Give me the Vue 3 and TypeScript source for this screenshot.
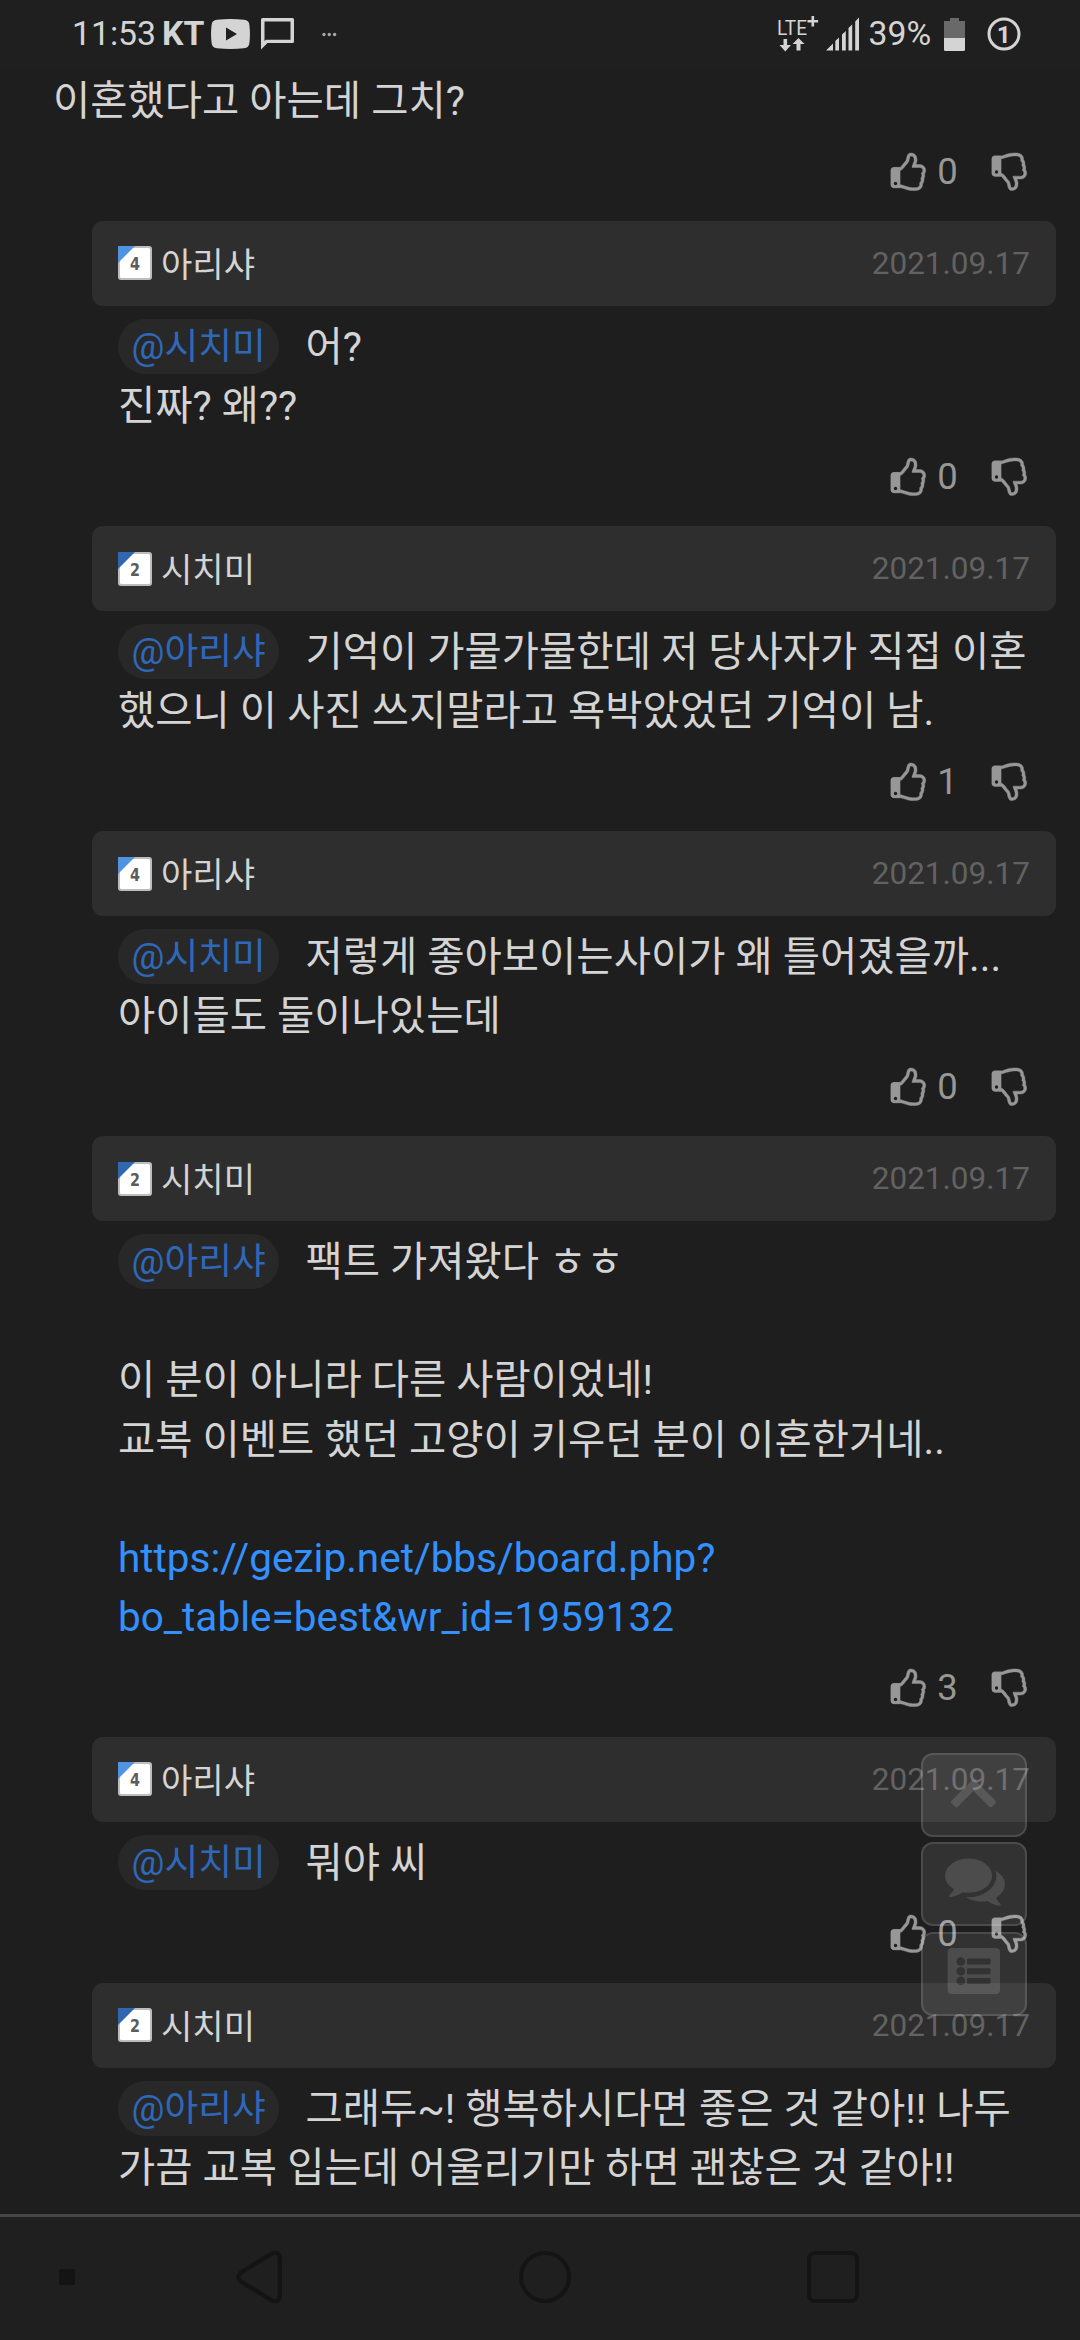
<script setup lang="ts">
interface Comment {
  author: string
  level: number
  mention: string
  lines: string[]
  link?: string[]
  likes?: number
}

const date = '2021.09.17'

const comments: Comment[] = [
  { author: '아리샤', level: 4, mention: '@시치미', lines: ['어?', '진짜? 왜??'], likes: 0 },
  {
    author: '시치미',
    level: 2,
    mention: '@아리샤',
    lines: ['기억이 가물가물한데 저 당사자가 직접 이혼', '했으니 이 사진 쓰지말라고 욕박았었던 기억이 남.'],
    likes: 1,
  },
  {
    author: '아리샤',
    level: 4,
    mention: '@시치미',
    lines: ['저렇게 좋아보이는사이가 왜 틀어졌을까...', '아이들도 둘이나있는데'],
    likes: 0,
  },
  {
    author: '시치미',
    level: 2,
    mention: '@아리샤',
    lines: ['팩트 가져왔다 ㅎㅎ', '', '이 분이 아니라 다른 사람이었네!', '교복 이벤트 했던 고양이 키우던 분이 이혼한거네..', ''],
    link: ['https://gezip.net/bbs/board.php?', 'bo_table=best&wr_id=1959132'],
    likes: 3,
  },
  { author: '아리샤', level: 4, mention: '@시치미', lines: ['뭐야 씨'], likes: 0 },
  {
    author: '시치미',
    level: 2,
    mention: '@아리샤',
    lines: ['그래두~! 행복하시다면 좋은 것 같아!! 나두', '가끔 교복 입는데 어울리기만 하면 괜찮은 것 같아!!'],
  },
]

const thumb =
  'M1408 768q0-51-39-89.5t-89-38.5h-352q0-58 48-159.5t48-160.5q0-98-32-145t-128-47q-26 26-38 85t-30.5 125.5-59.5 109.5q-22 23-77 91-4 5-23 30t-31.5 41-34.5 42.5-40 44-38.5 35.5-40 27-35.5 9h-32v640h32q13 0 31.5 3t33 6.5 38 11 35 11.5 35.5 12.5 29 10.5q211 73 342 73h121q192 0 192-167 0-26-5-56 30-16 47.5-52.5t17.5-73.5-18-69q53-50 53-119 0-25-10-55.5t-25-47.5q32-1 53.5-47t21.5-81zm128-1q0 89-49 163 9 33 9 69 0 77-38 144 3 21 3 43 0 101-60 178 1 139-85 219.5t-227 80.5h-129q-96 0-189.5-22.5t-216.5-65.5q-116-40-138-40h-288q-53 0-90.5-37.5t-37.5-90.5v-640q0-53 37.5-90.5t90.5-37.5h274q36-24 137-155 58-75 107-128 24-25 35.5-85.5t30.5-126.5 62-108q39-37 90-37 84 0 151 32.5t102 101.5 35 186q0 93-48 192h176q104 0 180 76t76 179z'
const cuff = 'M128 640H400V1536H128Q0 1536 0 1408V768Q0 640 128 640z'
</script>

<template>
  <div class="screen">
    <header class="status">
      <span class="clock">11:53</span>
      <span class="carrier">KT</span>
      <svg class="yt" width="39" height="30" viewBox="0 0 39 30">
        <path fill-rule="evenodd" d="M6 .8Q19.500-.6 33 .8Q38 1.200 38.400 6Q39.500 15 38.400 24Q38 28.800 33 29.200Q19.500 30.600 6 29.200Q1 28.800.6 24Q-.5 15 .6 6Q1 1.200 6 .8zM15 8.500V21.500L26 15z" />
      </svg>
      <svg class="msg" width="33" height="32" viewBox="0 0 33 32">
        <path fill-rule="evenodd" d="M1.500 0H31.500Q33 0 33 1.500V23.500Q33 25 31.500 25H6.500L0 31.500V1.500Q0 0 1.500 0zM3.500 3.500V23L5 21.700H29.500V3.500z" />
      </svg>
      <svg class="dots" width="15" height="5" viewBox="0 0 15 5">
        <circle cx="2" cy="2.500" r="1.700" /><circle cx="7.300" cy="2.500" r="1.700" /><circle cx="12.600" cy="2.500" r="1.700" />
      </svg>
      <svg class="lte" width="43" height="38" viewBox="0 0 43 38">
        <text x="0" y="20" font-size="21" textLength="30" lengthAdjust="spacingAndGlyphs">LTE</text>
        <path d="M34.500 1h2.600v4h4v2.600h-4v4h-2.600v-4h-4v-2.600h4z" />
        <path d="M6.500 24h3.600v6h3.900L8.300 36.500 2.500 30h4zM21.500 23l6 6h-4v6.500h-4V29h-4z" />
      </svg>
      <svg class="signal" width="34" height="34" viewBox="0 0 34 34">
        <path d="M0 33.500L7 26.500V33.500zM9.300 24L13 20.500V33.500H9.300zM16 17.500L19.800 14V33.500H16zM22.500 11L26.200 7.500V33.500H22.500zM29.200 4.500L33 .5V33.500H29.200z" />
      </svg>
      <span class="percent">39%</span>
      <svg class="battery" width="21" height="33" viewBox="0 0 21 33">
        <path class="empty" d="M6 0h9v3h6v17H0V3h6z" />
        <path d="M0 20h21v11.500q0 1.500-1.500 1.500h-18Q0 33 0 31.500z" />
      </svg>
      <svg class="one" width="34" height="34" viewBox="0 0 34 34">
        <circle class="ring" cx="17" cy="17" r="15" />
        <text x="16.800" y="25.700" font-size="24.500" font-weight="700" text-anchor="middle">1</text>
      </svg>
    </header>

    <main>
      <section class="root-comment">
        <p class="line">이혼했다고 아는데 그치?</p>
        <div class="votes">
          <svg class="up" viewBox="0 0 1536 1664">
            <path :d="thumb" fill-rule="evenodd" /><path :d="cuff" /><circle class="button-dot" cx="200" cy="1350" r="75" />
          </svg>
          <span class="count">0</span>
          <svg class="down" viewBox="0 0 1536 1664">
            <path :d="thumb" fill-rule="evenodd" /><path :d="cuff" /><circle class="button-dot" cx="200" cy="826" r="75" />
          </svg>
        </div>
      </section>

      <article v-for="(c, i) in comments" :key="i" class="reply">
        <div class="head">
          <svg class="badge" width="34" height="34" viewBox="0 0 34 34">
            <rect width="34" height="34" rx="3" fill="#bdbdbd" />
            <rect x="2" y="2" width="30" height="30" rx="1.500" fill="#fff" />
            <path d="M0 0H17L0 17z" :fill="c.level === 4 ? '#5093e3' : '#2f68b0'" />
            <text x="12" y="23.500" textLength="10" lengthAdjust="spacingAndGlyphs">{{ c.level }}</text>
          </svg>
          <span class="author">{{ c.author }}</span>
          <time class="date">{{ date }}</time>
        </div>
        <div class="body">
          <p v-for="(l, n) in c.lines" :key="n" class="line">
            <span v-if="n === 0" class="mention">{{ c.mention }}</span>{{ l }}
          </p>
          <a v-if="c.link" class="link"><span v-for="part in c.link" :key="part" class="line">{{ part }}</span></a>
        </div>
        <div v-if="c.likes !== undefined" class="votes">
          <svg class="up" viewBox="0 0 1536 1664">
            <path :d="thumb" fill-rule="evenodd" /><path :d="cuff" /><circle class="button-dot" cx="200" cy="1350" r="75" />
          </svg>
          <span class="count">{{ c.likes }}</span>
          <svg class="down" viewBox="0 0 1536 1664">
            <path :d="thumb" fill-rule="evenodd" /><path :d="cuff" /><circle class="button-dot" cx="200" cy="826" r="75" />
          </svg>
        </div>
      </article>
    </main>

    <aside class="float">
      <button class="fab">
        <svg width="106" height="84" viewBox="0 0 106 84">
          <path d="M50.800 27.500Q52.500 25.800 54.200 27.500L74.500 47.700Q75.800 49 74.500 50.300L71 53.800Q69.700 55 68.400 53.800L52.500 38 36.600 53.800Q35.300 55 34 53.800L30.500 50.300Q29.200 49 30.500 47.700z" />
        </svg>
      </button>
      <button class="fab">
        <svg class="talk" width="60" height="60" viewBox="0 0 1792 1792">
          <path d="M1408 768q0 139-94 257t-256.500 186.500-353.500 68.500q-86 0-176-16-124 88-278 128-36 9-86 16h-3q-11 0-20.500-8t-11.500-21q-1-3-1-6.500t.5-6.500 2-6l2.500-5 3.500-5.500 4-5 4.500-5 4-4.500q5-6 23-25t26-29.500 22.500-29 25-38.500 20.500-44q-124-72-195-177t-71-224q0-139 94-257t256.500-186.500 353.500-68.500 353.500 68.500 256.500 186.500 94 257zm384 256q0 120-71 224.500t-195 176.500q10 24 20.500 44t25 38.500 22.500 29 26 29.500 23 25q1 1 4 4.500t4.500 5 4 5 3.500 5.500l2.500 5 2 6 .5 6.500-1 6.500q-3 14-13 22t-22 7q-50-7-86-16-154-40-278-128-90 16-176 16-271 0-472-132 58 4 88 4 161 0 309-45t264-129q125-92 192-212t67-254q0-77-23-152 129 71 204 178t75 230z" />
        </svg>
      </button>
      <button class="fab">
        <svg width="106" height="84" viewBox="0 0 106 84">
          <path fill-rule="evenodd" d="M31 16H74.500Q79 16 79 20.500V57.500Q79 62 74.500 62H31Q26.500 62 26.500 57.500V20.500Q26.500 16 31 16zM35.500 29.500a4.300 4.300 0 1 0 8.600 0a4.300 4.300 0 1 0-8.600 0zM35.500 39.200a4.300 4.300 0 1 0 8.600 0a4.300 4.300 0 1 0-8.600 0zM35.500 48.900a4.300 4.300 0 1 0 8.600 0a4.300 4.300 0 1 0-8.600 0zM47 26.400h21.500q1 0 1 1v4q0 1-1 1H47q-1 0-1-1v-4q0-1 1-1zM47 36.200h21.500q1 0 1 1v4q0 1-1 1H47q-1 0-1-1v-4q0-1 1-1zM47 46h21.500q1 0 1 1v4q0 1-1 1H47q-1 0-1-1v-4q0-1 1-1z" />
        </svg>
      </button>
    </aside>

    <nav class="nav">
      <i class="pin"></i>
      <svg class="back" width="46" height="54" viewBox="0 0 46 54">
        <path d="M36 3.300L5 22.500Q-.5 27 5 31.500L36 50.500Q43.500 53 43.800 45.500V8.500Q43.500 .8 36 3.300z" />
      </svg>
      <i class="home"></i>
      <i class="recent"></i>
    </nav>
  </div>
</template>

<style>
body {
  background: #1e1e1e;
}
</style>

<style scoped>
.screen {
  position: relative;
  display: flex;
  flex-direction: column;
  width: 1080px;
  height: 2340px;
  overflow: hidden;
  background: #1e1e1e;
  color: #d4d4d4;
  font-family: Roboto, "Noto Sans CJK KR", sans-serif;
}

.status {
  display: flex;
  flex: none;
  align-items: center;
  box-sizing: border-box;
  height: 68px;
  padding-left: 72px;
  background: #1f1f1f;
  fill: #d4d4d4;
  font-size: 33.75px;
  line-height: 68px;
  white-space: nowrap;
}

.status svg {
  flex: none;
}

.clock {
  width: 90px;
}

.carrier {
  width: 49px;
  font-weight: 700;
}

.msg {
  margin-left: 10.5px;
}

.dots {
  margin-left: 28px;
  opacity: 0.75;
}

.lte {
  margin-left: 440.5px;
}

.signal {
  margin-left: 5.5px;
}

.percent {
  width: 75px;
  margin-left: 9px;
}

.one {
  margin-left: 22.5px;
}

.empty {
  fill: #696969;
}

.ring {
  fill: none;
  stroke: #d4d4d4;
  stroke-width: 3;
}

main {
  flex: none;
  height: 2146px;
}

.root-comment {
  padding: 4px 0 0 53px;
}

.line {
  display: block;
  height: 59.15px;
  margin: 0;
  font-size: 40.5px;
  line-height: 59.15px;
  white-space: nowrap;
}

.votes {
  display: flex;
  justify-content: flex-end;
  height: 89.8px;
  padding-right: 53px;
  color: #979797;
  fill: #979797;
}

.up,
.down {
  flex: none;
  overflow: visible;
  width: 34.7px;
  height: 37.6px;
  margin-top: 21.8px;
}

.up path,
.down path {
  stroke: #979797;
  stroke-width: 20;
}

.down {
  transform: scaleY(-1);
}

.button-dot {
  fill: #1e1e1e;
}

.count {
  width: 39px;
  margin: 0 16px 0 12px;
  font-size: 36.5px;
  line-height: 82.6px;
}

.reply {
  padding-left: 92px;
}

.head {
  display: flex;
  align-items: center;
  box-sizing: border-box;
  width: 964px;
  height: 85px;
  padding: 0 26px;
  border-radius: 11px;
  background: #2e2e2e;
}

.badge {
  flex: none;
}

.badge text {
  fill: #5c5c5c;
  font: 700 18px "DejaVu Sans", sans-serif;
}

.author {
  margin: 0 0 3px 9px;
  font-size: 34.1px;
}

.date {
  margin-left: auto;
  color: #626262;
  font-size: 31.5px;
}

.body {
  padding: 12px 0 0 26px;
}

.mention {
  display: inline-block;
  box-sizing: border-box;
  width: 161px;
  height: 55px;
  margin: 1px 26.5px 0 0;
  padding-left: 13.5px;
  border-radius: 28px;
  background: #282828;
  color: #2f68b8;
  font-size: 36.7px;
  line-height: 55px;
  vertical-align: top;
}

.link {
  color: #3391ff;
}

.float {
  position: absolute;
  top: 1753px;
  left: 921px;
  display: flex;
  flex-direction: column;
  gap: 5.3px;
}

.fab {
  display: flex;
  align-items: center;
  justify-content: center;
  box-sizing: border-box;
  width: 106px;
  height: 84px;
  padding: 0;
  border: 2px solid rgba(255, 255, 255, 0.12);
  border-radius: 12px;
  background: rgba(255, 255, 255, 0.09);
  fill: rgba(255, 255, 255, 0.13);
}

.fab svg {
  flex: none;
}

.talk {
  margin: -8px 0 0 1px;
}

.nav {
  display: flex;
  flex: 1;
  align-items: center;
  padding: 0 0 4px 59px;
  border-top: 3px solid #464646;
  background: #1f1f1f;
}

.pin {
  width: 16px;
  height: 16px;
  border-radius: 2px;
  background: #141414;
}

.back {
  margin-left: 161px;
  fill: none;
  stroke: #141414;
  stroke-width: 4.300;
}

.home,
.recent {
  box-sizing: border-box;
  width: 52px;
  height: 52px;
  border: 4.300px solid #141414;
}

.home {
  margin-left: 237px;
  border-radius: 50%;
}

.recent {
  margin-left: 236px;
  border-radius: 8px;
}
</style>
